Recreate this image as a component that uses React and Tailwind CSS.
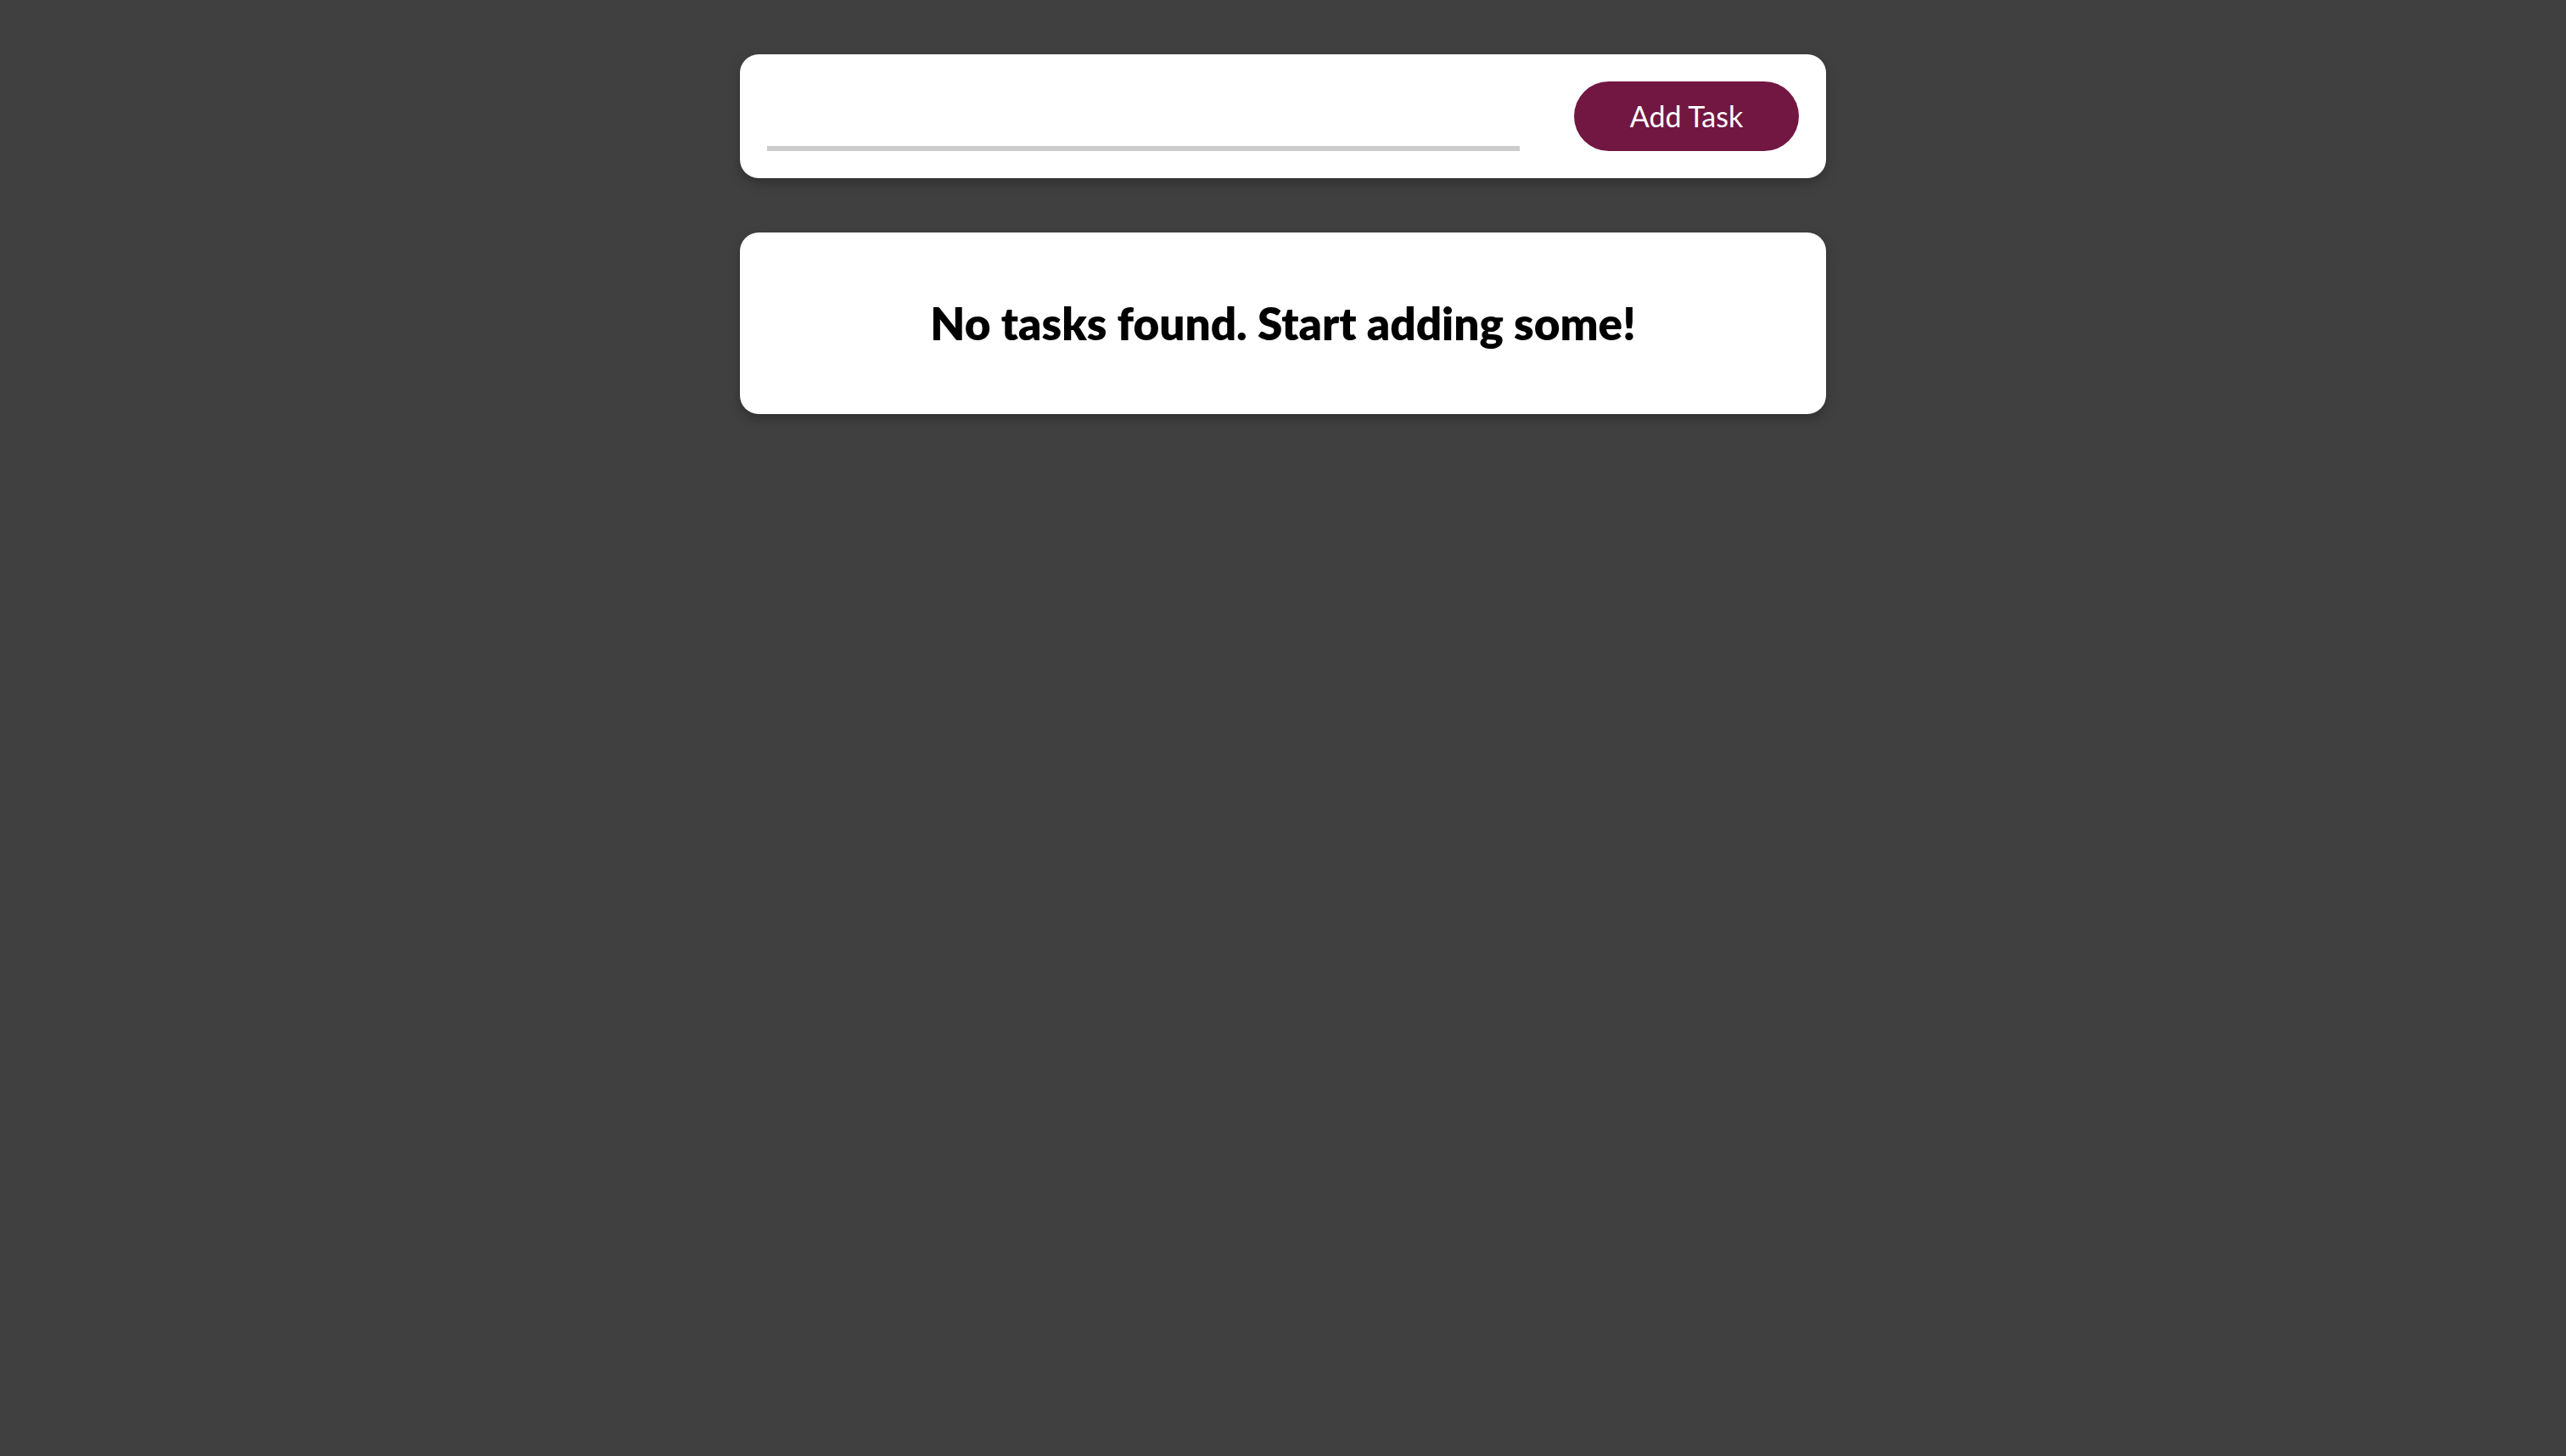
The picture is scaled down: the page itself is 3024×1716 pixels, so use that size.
// App.jsx
import React, { useState } from "react";

function App() {
  const [tasks, setTasks] = useState([]);
  const [text, setText] = useState("");

  const addTask = () => {
    if (!text.trim()) return;
    setTasks([...tasks, { id: Date.now(), title: text.trim() }]);
    setText("");
  };

  return (
    <div
      className="min-h-screen bg-[#404040] pt-[64px]"
      style={{ fontFamily: "Lato, 'Open Sans', sans-serif" }}
    >
      <div className="w-[1280px] mx-auto flex flex-col gap-[64px]">
        {/* input card */}
        <div className="bg-white rounded-[22px] p-[32px] flex items-end gap-[64px] shadow-[0_6px_14px_rgba(0,0,0,0.25)]">
          <input
            value={text}
            onChange={(e) => setText(e.target.value)}
            className="flex-1 h-[48px] border-b-[6px] border-[#cccccc] outline-none text-[32px] text-black"
          />
          <button
            onClick={addTask}
            className="w-[265px] h-[82px] rounded-full bg-[#721642] text-white text-[34px] leading-none"
          >
            Add Task
          </button>
        </div>

        {/* task list */}
        <div className="bg-white rounded-[22px] py-[74px] px-[32px] shadow-[0_6px_14px_rgba(0,0,0,0.25)]">
          {tasks.length === 0 ? (
            <h2 className="text-center text-black font-extrabold text-[53px] leading-[66px]">
              No tasks found. Start adding some!
            </h2>
          ) : (
            <ul className="flex flex-col gap-4">
              {tasks.map((t) => (
                <li key={t.id} className="text-[32px]">{t.title}</li>
              ))}
            </ul>
          )}
        </div>
      </div>
    </div>
  );
}

export default App;
